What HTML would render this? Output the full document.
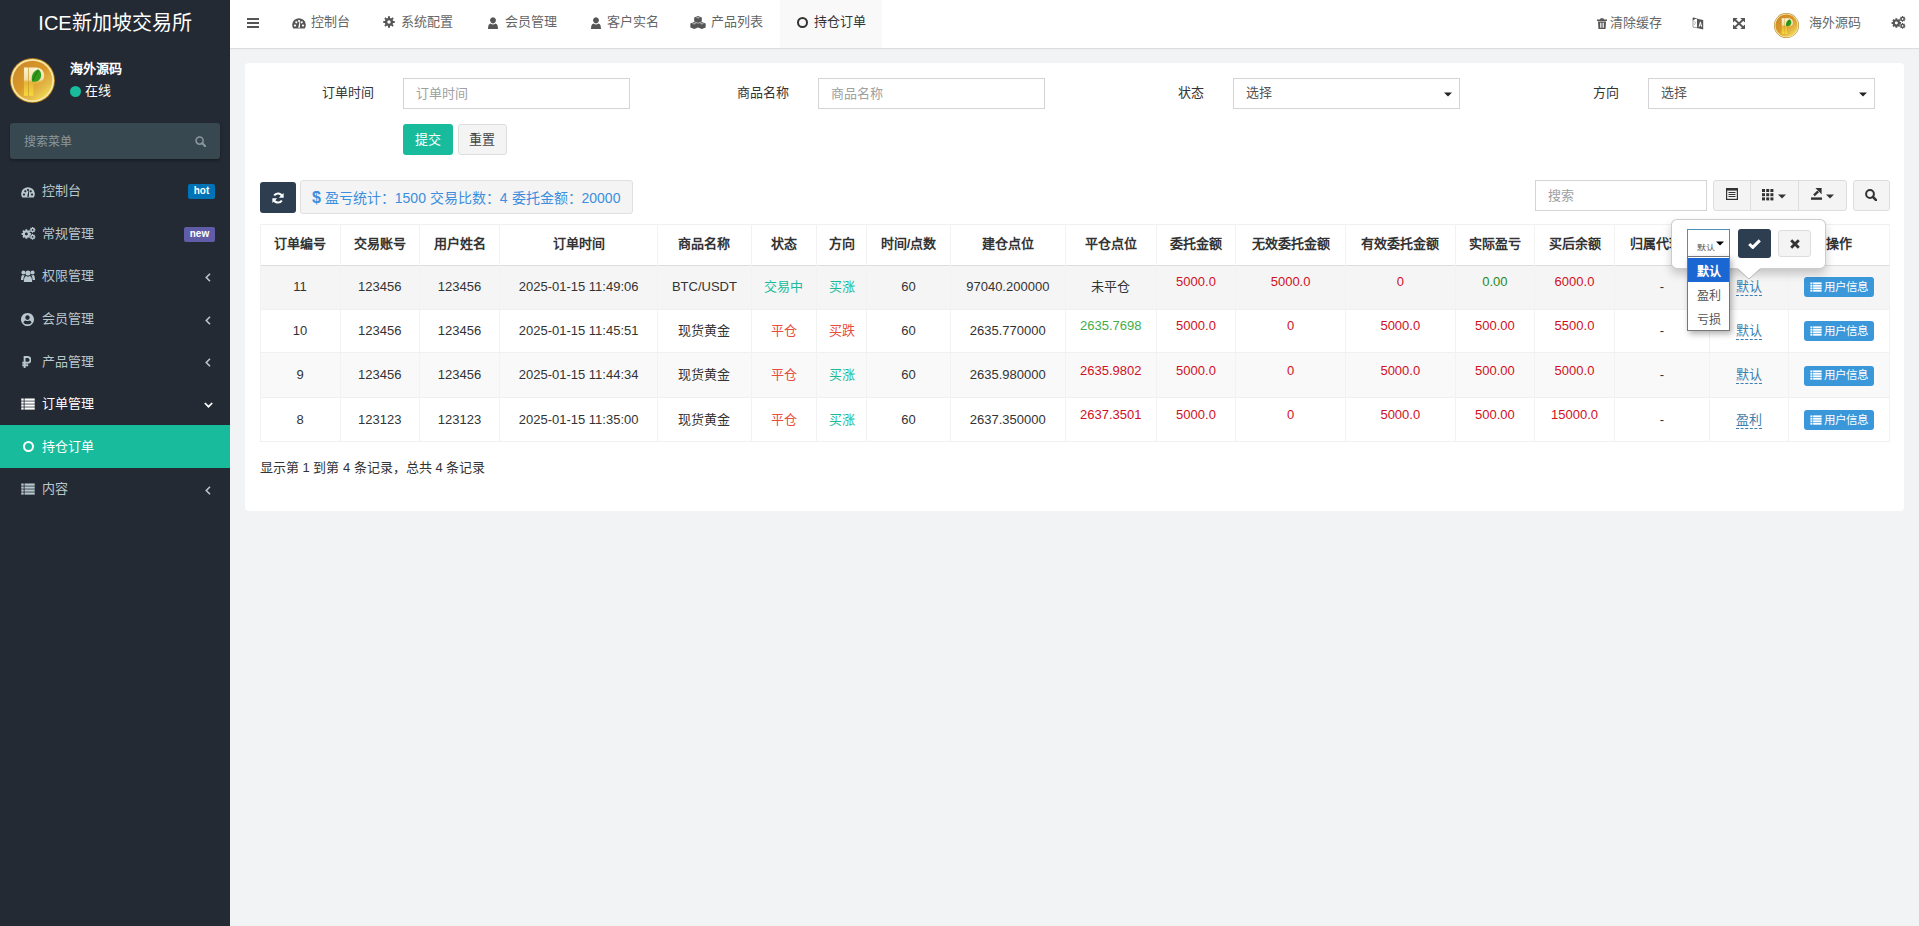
<!DOCTYPE html>
<html lang="zh-CN"><head><meta charset="utf-8">
<style>
*{box-sizing:border-box;margin:0;padding:0}
html,body{width:1919px;height:926px;overflow:hidden}
body{font-family:"Liberation Sans",sans-serif;font-size:13px;color:#333;background:#f1f3f5;position:relative}
.a{position:absolute;white-space:nowrap}
svg{display:block}
.badge{position:absolute;height:15px;line-height:13.5px;font-size:10px;font-weight:bold;color:#fff;text-align:center;border-radius:2px;font-family:"Liberation Sans",sans-serif}
</style></head><body>

<div class="a" style="left:0.0px;top:0.0px;width:230.0px;height:926.0px;background:#242a33"></div>
<div class="a" style="left:0.0px;top:8.0px;width:230px;height:30px;line-height:30px;text-align:center;color:#fff;font-size:20px">ICE新加坡交易所</div>
<div class="a" style="left:10.0px;top:57.5px;"><svg width="45" height="45" viewBox="0 0 100 100"><defs><linearGradient id="ga1" x1="0.15" y1="0.1" x2="0.85" y2="0.95"><stop offset="0" stop-color="#cf8a2a"/><stop offset=".45" stop-color="#d99828"/><stop offset=".75" stop-color="#e3b848"/><stop offset="1" stop-color="#f2e050"/></linearGradient><linearGradient id="pa1" x1="0" y1="0" x2="0" y2="1"><stop offset="0" stop-color="#fbf3d0"/><stop offset=".42" stop-color="#f3e0a8"/><stop offset=".52" stop-color="#e6b23a"/><stop offset="1" stop-color="#f4dc38"/></linearGradient></defs><circle cx="50" cy="50" r="50" fill="#b07818"/><circle cx="50" cy="50" r="48" fill="#f6e9a8"/><circle cx="50" cy="50" r="44" fill="url(#ga1)"/><path d="M31,21 H57 C70,21 76,30 76,39 C76,49 69,57 57,57 H52 V84 H31 Z" fill="url(#pa1)"/><rect x="40" y="21" width="2.2" height="63" fill="#c89a30" opacity=".7"/><path d="M49,52 C46,40 52,28 63,25 C71,31 72,45 62,51 C58,53 53,53 49,52 Z" fill="#2f9a1c"/><path d="M51,49 C55,41 58,34 63,28" stroke="#1d6a10" stroke-width="2" fill="none"/></svg></div>
<div class="a" style="left:70.0px;top:59.0px;height:20px;line-height:20px;color:#fff;font-weight:bold">海外源码</div>
<div class="a" style="left:70.0px;top:85.6px;width:11.0px;height:11.0px;background:#18bc9c;border-radius:50%"></div>
<div class="a" style="left:84.5px;top:81.0px;height:20px;line-height:20px;color:#fff">在线</div>
<div class="a" style="left:10.0px;top:123.0px;width:210.0px;height:35.5px;background:#374850;border-radius:3px;box-shadow:0 2px 3px rgba(0,0,0,.3)"></div>
<div class="a" style="left:24.0px;top:131.5px;height:20px;line-height:20px;color:#8a979e;font-size:12px">搜索菜单</div>
<div class="a" style="left:195.0px;top:136.0px;"><svg width="11" height="11" viewBox="0 0 12 12" ><g fill="none" stroke="#8a979e" stroke-width="1.7"><circle cx="5" cy="5" r="3.9"/><path d="M7.9,7.9 L11.2,11.2" stroke-linecap="round" stroke-width="2.3"/></g></svg></div>
<div class="a" style="left:42.0px;top:181.3px;height:20px;line-height:20px;color:#b8c7ce">控制台</div>
<div class="a" style="left:21.0px;top:185.8px;"><svg width="14" height="12" viewBox="0 0 14 12" ><path fill="#b8c7ce" fill-rule="evenodd" d="M1.2,11.5 A6.8,6.8 0 1 1 12.8,11.5 Z M3,7.6 a1,1 0 1,0 0.01,0 Z M4.3,4.3 a1,1 0 1,0 0.01,0 Z M7,3 a1,1 0 1,0 0.01,0 Z M9.7,4.3 a1,1 0 1,0 0.01,0 Z M11,7.6 a1,1 0 1,0 0.01,0 Z M6.2,10.8 L7.6,4.6 L8.1,4.7 L7.9,10.8 Z"/></svg></div>
<div class="a" style="left:42.0px;top:223.9px;height:20px;line-height:20px;color:#b8c7ce">常规管理</div>
<div class="a" style="left:21.0px;top:227.4px;"><svg width="15" height="13" viewBox="0 0 15 14" ><path fill="#b8c7ce" fill-rule="evenodd" d="M9.07,6.57 L10.30,6.59 L10.30,8.61 L9.07,8.63 L8.66,9.61 L9.52,10.49 L8.09,11.92 L7.21,11.06 L6.23,11.47 L6.21,12.70 L4.19,12.70 L4.17,11.47 L3.19,11.06 L2.31,11.92 L0.88,10.49 L1.74,9.61 L1.33,8.63 L0.10,8.61 L0.10,6.59 L1.33,6.57 L1.74,5.59 L0.88,4.71 L2.31,3.28 L3.19,4.14 L4.17,3.73 L4.19,2.50 L6.21,2.50 L6.23,3.73 L7.21,4.14 L8.09,3.28 L9.52,4.71 L8.66,5.59 Z M3.60,7.60 a1.60,1.60 0 1,0 3.20,0 a1.60,1.60 0 1,0 -3.20,0 Z M14.22,2.48 L14.94,2.50 L14.94,3.70 L14.22,3.72 L13.98,4.31 L14.48,4.82 L13.62,5.68 L13.11,5.18 L12.52,5.42 L12.50,6.14 L11.30,6.14 L11.28,5.42 L10.69,5.18 L10.18,5.68 L9.32,4.82 L9.82,4.31 L9.58,3.72 L8.86,3.70 L8.86,2.50 L9.58,2.48 L9.82,1.89 L9.32,1.38 L10.18,0.52 L10.69,1.02 L11.28,0.78 L11.30,0.06 L12.50,0.06 L12.52,0.78 L13.11,1.02 L13.62,0.52 L14.48,1.38 L13.98,1.89 Z M11.00,3.10 a0.90,0.90 0 1,0 1.80,0 a0.90,0.90 0 1,0 -1.80,0 Z M14.22,9.98 L14.94,10.00 L14.94,11.20 L14.22,11.22 L13.98,11.81 L14.48,12.32 L13.62,13.18 L13.11,12.68 L12.52,12.92 L12.50,13.64 L11.30,13.64 L11.28,12.92 L10.69,12.68 L10.18,13.18 L9.32,12.32 L9.82,11.81 L9.58,11.22 L8.86,11.20 L8.86,10.00 L9.58,9.98 L9.82,9.39 L9.32,8.88 L10.18,8.02 L10.69,8.52 L11.28,8.28 L11.30,7.56 L12.50,7.56 L12.52,8.28 L13.11,8.52 L13.62,8.02 L14.48,8.88 L13.98,9.39 Z M11.00,10.60 a0.90,0.90 0 1,0 1.80,0 a0.90,0.90 0 1,0 -1.80,0 Z"/></svg></div>
<div class="a" style="left:42.0px;top:266.4px;height:20px;line-height:20px;color:#b8c7ce">权限管理</div>
<div class="a" style="left:21.0px;top:270.4px;"><svg width="14" height="12" viewBox="0 0 14 12" ><g fill="#b8c7ce"><circle cx="7" cy="3" r="2.6"/><path d="M2.8,12 C2.8,8.2 4,6.3 5.3,6.1 C5.9,6.6 6.4,6.8 7,6.8 C7.6,6.8 8.1,6.6 8.7,6.1 C10,6.3 11.2,8.2 11.2,12 Z"/><circle cx="2.4" cy="2.6" r="2"/><circle cx="11.6" cy="2.6" r="2"/><path d="M0,10 C0,6.2 1,5.1 1.7,5 C2.3,5.4 3,5.5 3.8,5.3 C3,6.4 2.4,8 2.4,10 Z M14,10 C14,6.2 13,5.1 12.3,5 C11.7,5.4 11,5.5 10.2,5.3 C11,6.4 11.6,8 11.6,10 Z"/></g></svg></div>
<div class="a" style="left:205.0px;top:272.9px;"><svg width="6" height="9" viewBox="0 0 6 9" ><path fill="none" stroke="#b8c7ce" stroke-width="1.6" d="M5,0.8 L1.3,4.5 L5,8.2"/></svg></div>
<div class="a" style="left:42.0px;top:309.0px;height:20px;line-height:20px;color:#b8c7ce">会员管理</div>
<div class="a" style="left:21.0px;top:312.5px;"><svg width="13" height="13" viewBox="0 0 13 13" ><path fill="#b8c7ce" fill-rule="evenodd" d="M6.5,0 a6.5,6.5 0 1,0 0.01,0 Z M6.5,2.3 a2.2,2.3 0 1,0 0.01,0 Z M6.5,11.3 C4.8,11.3 3.3,10.6 2.4,9.4 C2.8,8.2 3.7,7.5 4.6,7.4 C5.2,7.8 5.8,8 6.5,8 C7.2,8 7.8,7.8 8.4,7.4 C9.3,7.5 10.2,8.2 10.6,9.4 C9.7,10.6 8.2,11.3 6.5,11.3 Z"/></svg></div>
<div class="a" style="left:205.0px;top:315.5px;"><svg width="6" height="9" viewBox="0 0 6 9" ><path fill="none" stroke="#b8c7ce" stroke-width="1.6" d="M5,0.8 L1.3,4.5 L5,8.2"/></svg></div>
<div class="a" style="left:42.0px;top:351.6px;height:20px;line-height:20px;color:#b8c7ce">产品管理</div>
<div class="a" style="left:22.0px;top:355.6px;"><svg width="9" height="12" viewBox="0 0 9 12" ><path fill="none" stroke="#b8c7ce" stroke-width="1.9" d="M2.6,12 V1 H5.6 A2.9,2.9 0 0 1 5.6,6.8 H0.3 M0.3,9.3 H6.2"/></svg></div>
<div class="a" style="left:205.0px;top:358.1px;"><svg width="6" height="9" viewBox="0 0 6 9" ><path fill="none" stroke="#b8c7ce" stroke-width="1.6" d="M5,0.8 L1.3,4.5 L5,8.2"/></svg></div>
<div class="a" style="left:42.0px;top:394.1px;height:20px;line-height:20px;color:#fff">订单管理</div>
<div class="a" style="left:21.0px;top:398.1px;"><svg width="14" height="12" viewBox="0 0 14 12.5" ><g fill="#fff"><rect x="0" y="0.5" width="2.5" height="2.3"/><rect x="3.4" y="0.5" width="10.6" height="2.3"/><rect x="0" y="3.6" width="2.5" height="2.3"/><rect x="3.4" y="3.6" width="10.6" height="2.3"/><rect x="0" y="6.7" width="2.5" height="2.3"/><rect x="3.4" y="6.7" width="10.6" height="2.3"/><rect x="0" y="9.8" width="2.5" height="2.3"/><rect x="3.4" y="9.8" width="10.6" height="2.3"/></g></svg></div>
<div class="a" style="left:204.0px;top:402.1px;"><svg width="9" height="6" viewBox="0 0 9 6" ><path fill="none" stroke="#fff" stroke-width="1.7" d="M0.8,1 L4.5,4.7 L8.2,1"/></svg></div>
<div class="a" style="left:0.0px;top:425.4px;width:230.0px;height:42.6px;background:#18bc9c"></div>
<div class="a" style="left:42.0px;top:436.7px;height:20px;line-height:20px;color:#fff">持仓订单</div>
<div class="a" style="left:22.5px;top:441.2px;"><svg width="11" height="11" viewBox="0 0 11 11" ><circle cx="5.5" cy="5.5" r="4.5" fill="none" stroke="#fff" stroke-width="2.0"/></svg></div>
<div class="a" style="left:42.0px;top:479.3px;height:20px;line-height:20px;color:#b8c7ce">内容</div>
<div class="a" style="left:21.0px;top:483.3px;"><svg width="14" height="12" viewBox="0 0 14 12.5" ><g fill="#b8c7ce"><rect x="0" y="0.5" width="2.5" height="2.3"/><rect x="3.4" y="0.5" width="10.6" height="2.3"/><rect x="0" y="3.6" width="2.5" height="2.3"/><rect x="3.4" y="3.6" width="10.6" height="2.3"/><rect x="0" y="6.7" width="2.5" height="2.3"/><rect x="3.4" y="6.7" width="10.6" height="2.3"/><rect x="0" y="9.8" width="2.5" height="2.3"/><rect x="3.4" y="9.8" width="10.6" height="2.3"/></g></svg></div>
<div class="a" style="left:205.0px;top:485.8px;"><svg width="6" height="9" viewBox="0 0 6 9" ><path fill="none" stroke="#b8c7ce" stroke-width="1.6" d="M5,0.8 L1.3,4.5 L5,8.2"/></svg></div>
<div class="badge" style="left:188px;top:184px;width:27px;background:#0073b7">hot</div>
<div class="badge" style="left:184px;top:226.5px;width:31px;background:#605ca8">new</div>
<div class="a" style="left:230.0px;top:0.0px;width:1689.0px;height:48.0px;background:#fff;box-shadow:0 1px 1px rgba(0,0,0,.09)"></div>
<div class="a" style="left:247.0px;top:17.5px;"><svg width="12" height="10" viewBox="0 0 12 10" ><g fill="#555"><rect x="0" y="0" width="12" height="2"/><rect x="0" y="4" width="12" height="2"/><rect x="0" y="8" width="12" height="2"/></g></svg></div>
<div class="a" style="left:780.0px;top:0.0px;width:101.6px;height:48.0px;background:#f9f9f9"></div>
<div class="a" style="left:310.5px;top:12.0px;height:20px;line-height:20px;color:#666">控制台</div>
<div class="a" style="left:292.0px;top:16.5px;"><svg width="14" height="12" viewBox="0 0 14 12" ><path fill="#555" fill-rule="evenodd" d="M1.2,11.5 A6.8,6.8 0 1 1 12.8,11.5 Z M3,7.6 a1,1 0 1,0 0.01,0 Z M4.3,4.3 a1,1 0 1,0 0.01,0 Z M7,3 a1,1 0 1,0 0.01,0 Z M9.7,4.3 a1,1 0 1,0 0.01,0 Z M11,7.6 a1,1 0 1,0 0.01,0 Z M6.2,10.8 L7.6,4.6 L8.1,4.7 L7.9,10.8 Z"/></svg></div>
<div class="a" style="left:401.0px;top:12.0px;height:20px;line-height:20px;color:#666">系统配置</div>
<div class="a" style="left:383.0px;top:16.0px;"><svg width="12" height="12" viewBox="0 0 14 14" ><path fill="#555" fill-rule="evenodd" d="M11.76,5.84 L13.69,5.80 L13.69,8.20 L11.76,8.16 L11.19,9.54 L12.58,10.89 L10.89,12.58 L9.54,11.19 L8.16,11.76 L8.20,13.69 L5.80,13.69 L5.84,11.76 L4.46,11.19 L3.11,12.58 L1.42,10.89 L2.81,9.54 L2.24,8.16 L0.31,8.20 L0.31,5.80 L2.24,5.84 L2.81,4.46 L1.42,3.11 L3.11,1.42 L4.46,2.81 L5.84,2.24 L5.80,0.31 L8.20,0.31 L8.16,2.24 L9.54,2.81 L10.89,1.42 L12.58,3.11 L11.19,4.46 Z M5.00,7.00 a2.00,2.00 0 1,0 4.00,0 a2.00,2.00 0 1,0 -4.00,0 Z"/></svg></div>
<div class="a" style="left:504.6px;top:12.0px;height:20px;line-height:20px;color:#666">会员管理</div>
<div class="a" style="left:487.5px;top:16.5px;"><svg width="10" height="12" viewBox="0 0 10 12" ><path fill="#555" d="M5,0.2 a2.9,3.1 0 1,1 -0.01,0 Z M0,12 C0,8.2 1.2,6.8 2.6,6.6 C3.3,7.3 4.1,7.6 5,7.6 C5.9,7.6 6.7,7.3 7.4,6.6 C8.8,6.8 10,8.2 10,12 Z"/></svg></div>
<div class="a" style="left:607.3px;top:12.0px;height:20px;line-height:20px;color:#666">客户实名</div>
<div class="a" style="left:591.0px;top:16.5px;"><svg width="10" height="12" viewBox="0 0 10 12" ><path fill="#555" d="M5,0.2 a2.9,3.1 0 1,1 -0.01,0 Z M0,12 C0,8.2 1.2,6.8 2.6,6.6 C3.3,7.3 4.1,7.6 5,7.6 C5.9,7.6 6.7,7.3 7.4,6.6 C8.8,6.8 10,8.2 10,12 Z"/></svg></div>
<div class="a" style="left:711.0px;top:12.0px;height:20px;line-height:20px;color:#666">产品列表</div>
<div class="a" style="left:690.0px;top:15.5px;"><svg width="16" height="13" viewBox="0 0 16 13.6" ><g fill="#555"><path d="M8,0 L12,1.6 V5.8 L8,7.4 L4,5.8 V1.6 Z"/><path d="M4,6.2 L8,7.8 V12 L4,13.6 L0,12 V7.8 Z"/><path d="M12,6.2 L16,7.8 V12 L12,13.6 L8,12 V7.8 Z"/></g><g fill="#fff" opacity=".55"><path d="M8,2.6 L5.5,1.9 L8,1 L10.5,1.9 Z"/><path d="M4,8.8 L1.5,8.1 L4,7.2 L6.5,8.1 Z"/><path d="M12,8.8 L9.5,8.1 L12,7.2 L14.5,8.1 Z"/></g></svg></div>
<div class="a" style="left:796.5px;top:16.5px;"><svg width="11" height="11" viewBox="0 0 11 11" ><circle cx="5.5" cy="5.5" r="4.5" fill="none" stroke="#333" stroke-width="2.0"/></svg></div>
<div class="a" style="left:814.0px;top:12.0px;height:20px;line-height:20px;color:#333">持仓订单</div>
<div class="a" style="left:1596.5px;top:17.5px;"><svg width="10" height="11" viewBox="0 0 10 11" ><path fill="#555" fill-rule="evenodd" d="M0,1.6 H3 L3.6,0.2 H6.4 L7,1.6 H10 V2.9 H0 Z M1,3.6 H9 L8.6,10.5 Q8.5,11 8,11 H2 Q1.5,11 1.4,10.5 Z M3,4.8 V9.8 H3.8 V4.8 Z M4.6,4.8 V9.8 H5.4 V4.8 Z M6.2,4.8 V9.8 H7 V4.8 Z"/></svg></div>
<div class="a" style="left:1610.0px;top:12.5px;height:20px;line-height:20px;color:#666">清除缓存</div>
<div class="a" style="left:1692.0px;top:16.5px;"><svg width="12" height="13" viewBox="0 0 12 13" ><path d="M1,1.2 L5.5,1.8 V10.8 L1,10.2 Z" fill="#fff" stroke="#555" stroke-width=".8" opacity=".7"/><path d="M0.8,0.5 L4.5,1.3 L0.8,3.5 Z" fill="#555"/><path d="M5,1.8 L11.2,3 V12.4 L5,11 Z" fill="#555"/><path d="M6.6,9.8 L8,4.8 H8.8 L10.2,9.8 H9.2 L8.9,8.6 H7.9 L7.6,9.8 Z M8.1,7.7 H8.7 L8.4,6.2 Z" fill="#fff"/><path d="M2.2,5 Q3,4 3.6,5.5 Q3,7.5 2,8" stroke="#555" stroke-width=".7" fill="none" opacity=".6"/></svg></div>
<div class="a" style="left:1733.0px;top:17.5px;"><svg width="12" height="11" viewBox="0 0 12 11" ><g fill="#555"><path d="M0,0 H4.8 L0,4.6 Z"/><path d="M12,0 V4.6 L7.2,0 Z"/><path d="M0,11 V6.4 L4.8,11 Z"/><path d="M12,11 H7.2 L12,6.4 Z"/></g><path d="M1.6,1.5 L10.4,9.5 M10.4,1.5 L1.6,9.5" stroke="#555" stroke-width="1.8"/></svg></div>
<div class="a" style="left:1774.0px;top:13.0px;"><svg width="25" height="25" viewBox="0 0 100 100"><defs><linearGradient id="ga2" x1="0.15" y1="0.1" x2="0.85" y2="0.95"><stop offset="0" stop-color="#cf8a2a"/><stop offset=".45" stop-color="#d99828"/><stop offset=".75" stop-color="#e3b848"/><stop offset="1" stop-color="#f2e050"/></linearGradient><linearGradient id="pa2" x1="0" y1="0" x2="0" y2="1"><stop offset="0" stop-color="#fbf3d0"/><stop offset=".42" stop-color="#f3e0a8"/><stop offset=".52" stop-color="#e6b23a"/><stop offset="1" stop-color="#f4dc38"/></linearGradient></defs><circle cx="50" cy="50" r="50" fill="#b07818"/><circle cx="50" cy="50" r="48" fill="#f6e9a8"/><circle cx="50" cy="50" r="44" fill="url(#ga2)"/><path d="M31,21 H57 C70,21 76,30 76,39 C76,49 69,57 57,57 H52 V84 H31 Z" fill="url(#pa2)"/><rect x="40" y="21" width="2.2" height="63" fill="#c89a30" opacity=".7"/><path d="M49,52 C46,40 52,28 63,25 C71,31 72,45 62,51 C58,53 53,53 49,52 Z" fill="#2f9a1c"/><path d="M51,49 C55,41 58,34 63,28" stroke="#1d6a10" stroke-width="2" fill="none"/></svg></div>
<div class="a" style="left:1809.0px;top:12.5px;height:20px;line-height:20px;color:#666">海外源码</div>
<div class="a" style="left:1891.0px;top:16.0px;"><svg width="15" height="13" viewBox="0 0 15 14" ><path fill="#555" fill-rule="evenodd" d="M9.07,6.57 L10.30,6.59 L10.30,8.61 L9.07,8.63 L8.66,9.61 L9.52,10.49 L8.09,11.92 L7.21,11.06 L6.23,11.47 L6.21,12.70 L4.19,12.70 L4.17,11.47 L3.19,11.06 L2.31,11.92 L0.88,10.49 L1.74,9.61 L1.33,8.63 L0.10,8.61 L0.10,6.59 L1.33,6.57 L1.74,5.59 L0.88,4.71 L2.31,3.28 L3.19,4.14 L4.17,3.73 L4.19,2.50 L6.21,2.50 L6.23,3.73 L7.21,4.14 L8.09,3.28 L9.52,4.71 L8.66,5.59 Z M3.60,7.60 a1.60,1.60 0 1,0 3.20,0 a1.60,1.60 0 1,0 -3.20,0 Z M14.22,2.48 L14.94,2.50 L14.94,3.70 L14.22,3.72 L13.98,4.31 L14.48,4.82 L13.62,5.68 L13.11,5.18 L12.52,5.42 L12.50,6.14 L11.30,6.14 L11.28,5.42 L10.69,5.18 L10.18,5.68 L9.32,4.82 L9.82,4.31 L9.58,3.72 L8.86,3.70 L8.86,2.50 L9.58,2.48 L9.82,1.89 L9.32,1.38 L10.18,0.52 L10.69,1.02 L11.28,0.78 L11.30,0.06 L12.50,0.06 L12.52,0.78 L13.11,1.02 L13.62,0.52 L14.48,1.38 L13.98,1.89 Z M11.00,3.10 a0.90,0.90 0 1,0 1.80,0 a0.90,0.90 0 1,0 -1.80,0 Z M14.22,9.98 L14.94,10.00 L14.94,11.20 L14.22,11.22 L13.98,11.81 L14.48,12.32 L13.62,13.18 L13.11,12.68 L12.52,12.92 L12.50,13.64 L11.30,13.64 L11.28,12.92 L10.69,12.68 L10.18,13.18 L9.32,12.32 L9.82,11.81 L9.58,11.22 L8.86,11.20 L8.86,10.00 L9.58,9.98 L9.82,9.39 L9.32,8.88 L10.18,8.02 L10.69,8.52 L11.28,8.28 L11.30,7.56 L12.50,7.56 L12.52,8.28 L13.11,8.52 L13.62,8.02 L14.48,8.88 L13.98,9.39 Z M11.00,10.60 a0.90,0.90 0 1,0 1.80,0 a0.90,0.90 0 1,0 -1.80,0 Z"/></svg></div>
<div class="a" style="left:245.0px;top:63.0px;width:1659.0px;height:448.0px;background:#fff;border-radius:4px"></div>
<div class="a" style="left:173.5px;top:83.0px;width:200px;height:20px;line-height:20px;text-align:right;color:#333">订单时间</div>
<div class="a" style="left:403.0px;top:78.0px;width:227.0px;height:30.5px;border:1px solid #d4d4d4;background:#fff"></div>
<div class="a" style="left:416.0px;top:83.5px;height:20px;line-height:20px;color:#a0a0a0">订单时间</div>
<div class="a" style="left:588.6px;top:83.0px;width:200px;height:20px;line-height:20px;text-align:right;color:#333">商品名称</div>
<div class="a" style="left:818.1px;top:78.0px;width:227.0px;height:30.5px;border:1px solid #d4d4d4;background:#fff"></div>
<div class="a" style="left:831.1px;top:83.5px;height:20px;line-height:20px;color:#a0a0a0">商品名称</div>
<div class="a" style="left:1003.7px;top:83.0px;width:200px;height:20px;line-height:20px;text-align:right;color:#333">状态</div>
<div class="a" style="left:1233.2px;top:78.0px;width:227.0px;height:30.5px;border:1px solid #d4d4d4;background:#fff"></div>
<div class="a" style="left:1246.2px;top:82.5px;height:20px;line-height:20px;color:#555">选择</div>
<div class="a" style="left:1444.2px;top:91.5px;"><svg width="8" height="5" viewBox="0 0 8 5" ><path fill="#222" d="M0,0.5 H8 L4,4.5 Z"/></svg></div>
<div class="a" style="left:1418.8px;top:83.0px;width:200px;height:20px;line-height:20px;text-align:right;color:#333">方向</div>
<div class="a" style="left:1648.3px;top:78.0px;width:227.0px;height:30.5px;border:1px solid #d4d4d4;background:#fff"></div>
<div class="a" style="left:1661.3px;top:82.5px;height:20px;line-height:20px;color:#555">选择</div>
<div class="a" style="left:1859.3px;top:91.5px;"><svg width="8" height="5" viewBox="0 0 8 5" ><path fill="#222" d="M0,0.5 H8 L4,4.5 Z"/></svg></div>
<div class="a" style="left:403.0px;top:124.0px;width:50.0px;height:31.0px;background:#18bc9c;border-radius:3px"></div>
<div class="a" style="left:403.0px;top:129.5px;width:50px;height:20px;line-height:20px;text-align:center;color:#fff">提交</div>
<div class="a" style="left:457.5px;top:124.0px;width:49.0px;height:31.0px;background:#f4f4f4;border:1px solid #ddd;border-radius:3px"></div>
<div class="a" style="left:457.0px;top:129.5px;width:50px;height:20px;line-height:20px;text-align:center;color:#444">重置</div>
<div class="a" style="left:260.0px;top:182.0px;width:36.0px;height:31.0px;background:#2c3e50;border-radius:3px"></div>
<div class="a" style="left:272.0px;top:191.5px;"><svg width="12" height="12" viewBox="0 0 12 12" ><g fill="none" stroke="#fff" stroke-width="2"><path d="M10.2,4.6 A4.4,4.4 0 0 0 2.2,3.6"/><path d="M1.8,7.4 A4.4,4.4 0 0 0 9.8,8.4"/></g><g fill="#fff"><path d="M11.6,1 V5.8 H6.8 Z"/><path d="M0.4,11 V6.2 H5.2 Z"/></g></svg></div>
<div class="a" style="left:300.0px;top:180.0px;width:333.0px;height:34.0px;background:#f4f4f4;border:1px solid #e0e0e0;border-radius:3px"></div>
<div class="a" style="left:312.0px;top:187.5px;height:20px;line-height:20px;color:#3c8ede;font-size:14px"><b style="font-size:16px">$</b> 盈亏统计：1500 交易比数：4 委托金额：20000</div>
<div class="a" style="left:1535.0px;top:180.0px;width:172.0px;height:31.0px;border:1px solid #d4d4d4;background:#fff"></div>
<div class="a" style="left:1548.0px;top:186.0px;height:20px;line-height:20px;color:#a0a0a0">搜索</div>
<div class="a" style="left:1712.5px;top:180.0px;width:134.0px;height:31.0px;background:#f4f4f4;border:1px solid #ddd;border-radius:3px"></div>
<div class="a" style="left:1749.5px;top:180.0px;width:1.0px;height:31.0px;background:#ddd"></div>
<div class="a" style="left:1797.8px;top:180.0px;width:1.0px;height:31.0px;background:#ddd"></div>
<div class="a" style="left:1726.0px;top:188.0px;"><svg width="12" height="12" viewBox="0 0 12 12" ><g fill="none" stroke="#333"><rect x="0.6" y="0.6" width="10.8" height="10.8" stroke-width="1.2"/></g><g fill="#333"><rect x="0.6" y="0.6" width="10.8" height="2"/><rect x="2.5" y="4" width="7" height="1"/><rect x="2.5" y="6" width="7" height="1"/><rect x="2.5" y="8" width="7" height="1"/></g></svg></div>
<div class="a" style="left:1762.0px;top:189.0px;"><svg width="12" height="12" viewBox="0 0 12 12" ><g fill="#333"><rect x="0.0" y="0.0" width="3" height="3"/><rect x="0.0" y="4.2" width="3" height="3"/><rect x="0.0" y="8.4" width="3" height="3"/><rect x="4.2" y="0.0" width="3" height="3"/><rect x="4.2" y="4.2" width="3" height="3"/><rect x="4.2" y="8.4" width="3" height="3"/><rect x="8.4" y="0.0" width="3" height="3"/><rect x="8.4" y="4.2" width="3" height="3"/><rect x="8.4" y="8.4" width="3" height="3"/></g></svg></div>
<div class="a" style="left:1778.0px;top:194.0px;"><svg width="8" height="5" viewBox="0 0 8 5" ><path fill="#333" d="M0,0.5 H8 L4,4.5 Z"/></svg></div>
<div class="a" style="left:1810.5px;top:188.0px;"><svg width="12" height="12" viewBox="0 0 12 12" ><g fill="#333"><rect x="0" y="9.4" width="11" height="2.4"/><path d="M4.4,0 H10.6 V6.2 Z"/><path d="M2.2,6.6 L6.4,2.6 L8,4.2 L3.8,8.2 Z"/></g></svg></div>
<div class="a" style="left:1826.0px;top:194.0px;"><svg width="8" height="5" viewBox="0 0 8 5" ><path fill="#333" d="M0,0.5 H8 L4,4.5 Z"/></svg></div>
<div class="a" style="left:1852.5px;top:180.0px;width:37.0px;height:31.0px;background:#f4f4f4;border:1px solid #ddd;border-radius:3px"></div>
<div class="a" style="left:1865.0px;top:189.0px;"><svg width="12" height="12" viewBox="0 0 12 12" ><g fill="none" stroke="#333" stroke-width="2.0"><circle cx="5" cy="5" r="3.9"/><path d="M7.9,7.9 L11.2,11.2" stroke-linecap="round" stroke-width="2.6"/></g></svg></div>
<div class="a" style="left:260.0px;top:265.0px;width:1629.2px;height:44.5px;background:#f5f5f5"></div>
<div class="a" style="left:260.0px;top:352.5px;width:1629.2px;height:44.5px;background:#f9f9f9"></div>
<div class="a" style="left:260.0px;top:224.0px;width:1629.2px;height:1.0px;background:#f0f0f0"></div>
<div class="a" style="left:260.0px;top:264.5px;width:1629.2px;height:1.0px;background:#dcdcdc"></div>
<div class="a" style="left:260.0px;top:309.0px;width:1629.2px;height:1.0px;background:#f0f0f0"></div>
<div class="a" style="left:260.0px;top:352.0px;width:1629.2px;height:1.0px;background:#f0f0f0"></div>
<div class="a" style="left:260.0px;top:396.5px;width:1629.2px;height:1.0px;background:#f0f0f0"></div>
<div class="a" style="left:260.0px;top:440.5px;width:1629.2px;height:1.0px;background:#f0f0f0"></div>
<div class="a" style="left:259.5px;top:224.0px;width:1.0px;height:217.5px;background:#f2f2f2"></div>
<div class="a" style="left:339.5px;top:224.0px;width:1.0px;height:217.5px;background:#f2f2f2"></div>
<div class="a" style="left:419.0px;top:224.0px;width:1.0px;height:217.5px;background:#f2f2f2"></div>
<div class="a" style="left:499.0px;top:224.0px;width:1.0px;height:217.5px;background:#f2f2f2"></div>
<div class="a" style="left:657.3px;top:224.0px;width:1.0px;height:217.5px;background:#f2f2f2"></div>
<div class="a" style="left:750.5px;top:224.0px;width:1.0px;height:217.5px;background:#f2f2f2"></div>
<div class="a" style="left:815.8px;top:224.0px;width:1.0px;height:217.5px;background:#f2f2f2"></div>
<div class="a" style="left:866.1px;top:224.0px;width:1.0px;height:217.5px;background:#f2f2f2"></div>
<div class="a" style="left:949.9px;top:224.0px;width:1.0px;height:217.5px;background:#f2f2f2"></div>
<div class="a" style="left:1064.8px;top:224.0px;width:1.0px;height:217.5px;background:#f2f2f2"></div>
<div class="a" style="left:1155.8px;top:224.0px;width:1.0px;height:217.5px;background:#f2f2f2"></div>
<div class="a" style="left:1235.2px;top:224.0px;width:1.0px;height:217.5px;background:#f2f2f2"></div>
<div class="a" style="left:1344.9px;top:224.0px;width:1.0px;height:217.5px;background:#f2f2f2"></div>
<div class="a" style="left:1454.8px;top:224.0px;width:1.0px;height:217.5px;background:#f2f2f2"></div>
<div class="a" style="left:1534.0px;top:224.0px;width:1.0px;height:217.5px;background:#f2f2f2"></div>
<div class="a" style="left:1614.0px;top:224.0px;width:1.0px;height:217.5px;background:#f2f2f2"></div>
<div class="a" style="left:1708.9px;top:224.0px;width:1.0px;height:217.5px;background:#f2f2f2"></div>
<div class="a" style="left:1787.9px;top:224.0px;width:1.0px;height:217.5px;background:#f2f2f2"></div>
<div class="a" style="left:1888.7px;top:224.0px;width:1.0px;height:217.5px;background:#f2f2f2"></div>
<div class="a" style="left:260.0px;top:234.0px;width:80px;height:20px;line-height:20px;text-align:center;color:#333;font-weight:bold">订单编号</div>
<div class="a" style="left:340.2px;top:234.0px;width:79px;height:20px;line-height:20px;text-align:center;color:#333;font-weight:bold">交易账号</div>
<div class="a" style="left:419.5px;top:234.0px;width:80px;height:20px;line-height:20px;text-align:center;color:#333;font-weight:bold">用户姓名</div>
<div class="a" style="left:499.6px;top:234.0px;width:158px;height:20px;line-height:20px;text-align:center;color:#333;font-weight:bold">订单时间</div>
<div class="a" style="left:657.9px;top:234.0px;width:93px;height:20px;line-height:20px;text-align:center;color:#333;font-weight:bold">商品名称</div>
<div class="a" style="left:751.1px;top:234.0px;width:65px;height:20px;line-height:20px;text-align:center;color:#333;font-weight:bold">状态</div>
<div class="a" style="left:816.5px;top:234.0px;width:50px;height:20px;line-height:20px;text-align:center;color:#333;font-weight:bold">方向</div>
<div class="a" style="left:867.0px;top:234.0px;width:83px;height:20px;line-height:20px;text-align:center;color:#333;font-weight:bold">时间/点数</div>
<div class="a" style="left:950.8px;top:234.0px;width:114px;height:20px;line-height:20px;text-align:center;color:#333;font-weight:bold">建仓点位</div>
<div class="a" style="left:1065.3px;top:234.0px;width:91px;height:20px;line-height:20px;text-align:center;color:#333;font-weight:bold">平仓点位</div>
<div class="a" style="left:1156.5px;top:234.0px;width:79px;height:20px;line-height:20px;text-align:center;color:#333;font-weight:bold">委托金额</div>
<div class="a" style="left:1236.1px;top:234.0px;width:109px;height:20px;line-height:20px;text-align:center;color:#333;font-weight:bold">无效委托金额</div>
<div class="a" style="left:1345.8px;top:234.0px;width:109px;height:20px;line-height:20px;text-align:center;color:#333;font-weight:bold">有效委托金额</div>
<div class="a" style="left:1455.4px;top:234.0px;width:79px;height:20px;line-height:20px;text-align:center;color:#333;font-weight:bold">实际盈亏</div>
<div class="a" style="left:1534.5px;top:234.0px;width:80px;height:20px;line-height:20px;text-align:center;color:#333;font-weight:bold">买后余额</div>
<div class="a" style="left:1609.0px;top:234.0px;width:94px;height:20px;line-height:20px;text-align:center;color:#333;font-weight:bold">归属代理</div>
<div class="a" style="left:1709.4px;top:234.0px;width:79px;height:20px;line-height:20px;text-align:center;color:#333;font-weight:bold"></div>
<div class="a" style="left:1788.8px;top:234.0px;width:100px;height:20px;line-height:20px;text-align:center;color:#333;font-weight:bold">操作</div>
<div class="a" style="left:260.0px;top:276.6px;width:80px;height:20px;line-height:20px;text-align:center;color:#333">11</div>
<div class="a" style="left:340.2px;top:276.6px;width:79px;height:20px;line-height:20px;text-align:center;color:#333">123456</div>
<div class="a" style="left:419.5px;top:276.6px;width:80px;height:20px;line-height:20px;text-align:center;color:#333">123456</div>
<div class="a" style="left:499.6px;top:276.6px;width:158px;height:20px;line-height:20px;text-align:center;color:#333">2025-01-15 11:49:06</div>
<div class="a" style="left:657.9px;top:276.6px;width:93px;height:20px;line-height:20px;text-align:center;color:#333">BTC/USDT</div>
<div class="a" style="left:751.1px;top:276.6px;width:65px;height:20px;line-height:20px;text-align:center;color:#18bc9c">交易中</div>
<div class="a" style="left:816.5px;top:276.6px;width:50px;height:20px;line-height:20px;text-align:center;color:#18bc9c">买涨</div>
<div class="a" style="left:867.0px;top:276.6px;width:83px;height:20px;line-height:20px;text-align:center;color:#333">60</div>
<div class="a" style="left:950.8px;top:276.6px;width:114px;height:20px;line-height:20px;text-align:center;color:#333">97040.200000</div>
<div class="a" style="left:1065.3px;top:276.6px;width:91px;height:20px;line-height:20px;text-align:center;color:#333">未平仓</div>
<div class="a" style="left:1156.5px;top:272.1px;width:79px;height:20px;line-height:20px;text-align:center;color:#d0101e">5000.0</div>
<div class="a" style="left:1236.1px;top:272.1px;width:109px;height:20px;line-height:20px;text-align:center;color:#d0101e">5000.0</div>
<div class="a" style="left:1345.8px;top:272.1px;width:109px;height:20px;line-height:20px;text-align:center;color:#d0101e">0</div>
<div class="a" style="left:1455.4px;top:272.1px;width:79px;height:20px;line-height:20px;text-align:center;color:#1e8a1e">0.00</div>
<div class="a" style="left:1534.5px;top:272.1px;width:80px;height:20px;line-height:20px;text-align:center;color:#d0101e">6000.0</div>
<div class="a" style="left:1615.0px;top:276.6px;width:94px;height:20px;line-height:20px;text-align:center;color:#333">-</div>
<div class="a" style="left:1709.4px;top:276.6px;width:79px;height:20px;line-height:20px;text-align:center;color:#3a7fb0"><span style="border-bottom:1px dashed #3a7fb0;padding-bottom:1px">默认</span></div>
<div class="a" style="left:1804.0px;top:276.9px;width:70.0px;height:20.0px;background:#3a97da;border-radius:3px"></div>
<div class="a" style="left:1810.0px;top:281.6px;"><svg width="12" height="10" viewBox="0 0 14 12.5" ><g fill="#fff"><rect x="0" y="0.5" width="2.5" height="2.3"/><rect x="3.4" y="0.5" width="10.6" height="2.3"/><rect x="0" y="3.6" width="2.5" height="2.3"/><rect x="3.4" y="3.6" width="10.6" height="2.3"/><rect x="0" y="6.7" width="2.5" height="2.3"/><rect x="3.4" y="6.7" width="10.6" height="2.3"/><rect x="0" y="9.8" width="2.5" height="2.3"/><rect x="3.4" y="9.8" width="10.6" height="2.3"/></g></svg></div>
<div class="a" style="left:1824.0px;top:276.6px;height:20px;line-height:20px;color:#fff;font-size:11.5px">用户信息</div>
<div class="a" style="left:260.0px;top:320.5px;width:80px;height:20px;line-height:20px;text-align:center;color:#333">10</div>
<div class="a" style="left:340.2px;top:320.5px;width:79px;height:20px;line-height:20px;text-align:center;color:#333">123456</div>
<div class="a" style="left:419.5px;top:320.5px;width:80px;height:20px;line-height:20px;text-align:center;color:#333">123456</div>
<div class="a" style="left:499.6px;top:320.5px;width:158px;height:20px;line-height:20px;text-align:center;color:#333">2025-01-15 11:45:51</div>
<div class="a" style="left:657.9px;top:320.5px;width:93px;height:20px;line-height:20px;text-align:center;color:#333">现货黄金</div>
<div class="a" style="left:751.1px;top:320.5px;width:65px;height:20px;line-height:20px;text-align:center;color:#e74c3c">平仓</div>
<div class="a" style="left:816.5px;top:320.5px;width:50px;height:20px;line-height:20px;text-align:center;color:#e74c3c">买跌</div>
<div class="a" style="left:867.0px;top:320.5px;width:83px;height:20px;line-height:20px;text-align:center;color:#333">60</div>
<div class="a" style="left:950.8px;top:320.5px;width:114px;height:20px;line-height:20px;text-align:center;color:#333">2635.770000</div>
<div class="a" style="left:1065.3px;top:316.0px;width:91px;height:20px;line-height:20px;text-align:center;color:#3fae49">2635.7698</div>
<div class="a" style="left:1156.5px;top:316.0px;width:79px;height:20px;line-height:20px;text-align:center;color:#d0101e">5000.0</div>
<div class="a" style="left:1236.1px;top:316.0px;width:109px;height:20px;line-height:20px;text-align:center;color:#d0101e">0</div>
<div class="a" style="left:1345.8px;top:316.0px;width:109px;height:20px;line-height:20px;text-align:center;color:#d0101e">5000.0</div>
<div class="a" style="left:1455.4px;top:316.0px;width:79px;height:20px;line-height:20px;text-align:center;color:#d0101e">500.00</div>
<div class="a" style="left:1534.5px;top:316.0px;width:80px;height:20px;line-height:20px;text-align:center;color:#d0101e">5500.0</div>
<div class="a" style="left:1615.0px;top:320.5px;width:94px;height:20px;line-height:20px;text-align:center;color:#333">-</div>
<div class="a" style="left:1709.4px;top:320.5px;width:79px;height:20px;line-height:20px;text-align:center;color:#3a7fb0"><span style="border-bottom:1px dashed #3a7fb0;padding-bottom:1px">默认</span></div>
<div class="a" style="left:1804.0px;top:320.8px;width:70.0px;height:20.0px;background:#3a97da;border-radius:3px"></div>
<div class="a" style="left:1810.0px;top:325.5px;"><svg width="12" height="10" viewBox="0 0 14 12.5" ><g fill="#fff"><rect x="0" y="0.5" width="2.5" height="2.3"/><rect x="3.4" y="0.5" width="10.6" height="2.3"/><rect x="0" y="3.6" width="2.5" height="2.3"/><rect x="3.4" y="3.6" width="10.6" height="2.3"/><rect x="0" y="6.7" width="2.5" height="2.3"/><rect x="3.4" y="6.7" width="10.6" height="2.3"/><rect x="0" y="9.8" width="2.5" height="2.3"/><rect x="3.4" y="9.8" width="10.6" height="2.3"/></g></svg></div>
<div class="a" style="left:1824.0px;top:320.5px;height:20px;line-height:20px;color:#fff;font-size:11.5px">用户信息</div>
<div class="a" style="left:260.0px;top:365.4px;width:80px;height:20px;line-height:20px;text-align:center;color:#333">9</div>
<div class="a" style="left:340.2px;top:365.4px;width:79px;height:20px;line-height:20px;text-align:center;color:#333">123456</div>
<div class="a" style="left:419.5px;top:365.4px;width:80px;height:20px;line-height:20px;text-align:center;color:#333">123456</div>
<div class="a" style="left:499.6px;top:365.4px;width:158px;height:20px;line-height:20px;text-align:center;color:#333">2025-01-15 11:44:34</div>
<div class="a" style="left:657.9px;top:365.4px;width:93px;height:20px;line-height:20px;text-align:center;color:#333">现货黄金</div>
<div class="a" style="left:751.1px;top:365.4px;width:65px;height:20px;line-height:20px;text-align:center;color:#e74c3c">平仓</div>
<div class="a" style="left:816.5px;top:365.4px;width:50px;height:20px;line-height:20px;text-align:center;color:#18bc9c">买涨</div>
<div class="a" style="left:867.0px;top:365.4px;width:83px;height:20px;line-height:20px;text-align:center;color:#333">60</div>
<div class="a" style="left:950.8px;top:365.4px;width:114px;height:20px;line-height:20px;text-align:center;color:#333">2635.980000</div>
<div class="a" style="left:1065.3px;top:360.9px;width:91px;height:20px;line-height:20px;text-align:center;color:#d0101e">2635.9802</div>
<div class="a" style="left:1156.5px;top:360.9px;width:79px;height:20px;line-height:20px;text-align:center;color:#d0101e">5000.0</div>
<div class="a" style="left:1236.1px;top:360.9px;width:109px;height:20px;line-height:20px;text-align:center;color:#d0101e">0</div>
<div class="a" style="left:1345.8px;top:360.9px;width:109px;height:20px;line-height:20px;text-align:center;color:#d0101e">5000.0</div>
<div class="a" style="left:1455.4px;top:360.9px;width:79px;height:20px;line-height:20px;text-align:center;color:#d0101e">500.00</div>
<div class="a" style="left:1534.5px;top:360.9px;width:80px;height:20px;line-height:20px;text-align:center;color:#d0101e">5000.0</div>
<div class="a" style="left:1615.0px;top:365.4px;width:94px;height:20px;line-height:20px;text-align:center;color:#333">-</div>
<div class="a" style="left:1709.4px;top:365.4px;width:79px;height:20px;line-height:20px;text-align:center;color:#3a7fb0"><span style="border-bottom:1px dashed #3a7fb0;padding-bottom:1px">默认</span></div>
<div class="a" style="left:1804.0px;top:365.7px;width:70.0px;height:20.0px;background:#3a97da;border-radius:3px"></div>
<div class="a" style="left:1810.0px;top:370.4px;"><svg width="12" height="10" viewBox="0 0 14 12.5" ><g fill="#fff"><rect x="0" y="0.5" width="2.5" height="2.3"/><rect x="3.4" y="0.5" width="10.6" height="2.3"/><rect x="0" y="3.6" width="2.5" height="2.3"/><rect x="3.4" y="3.6" width="10.6" height="2.3"/><rect x="0" y="6.7" width="2.5" height="2.3"/><rect x="3.4" y="6.7" width="10.6" height="2.3"/><rect x="0" y="9.8" width="2.5" height="2.3"/><rect x="3.4" y="9.8" width="10.6" height="2.3"/></g></svg></div>
<div class="a" style="left:1824.0px;top:365.4px;height:20px;line-height:20px;color:#fff;font-size:11.5px">用户信息</div>
<div class="a" style="left:260.0px;top:409.5px;width:80px;height:20px;line-height:20px;text-align:center;color:#333">8</div>
<div class="a" style="left:340.2px;top:409.5px;width:79px;height:20px;line-height:20px;text-align:center;color:#333">123123</div>
<div class="a" style="left:419.5px;top:409.5px;width:80px;height:20px;line-height:20px;text-align:center;color:#333">123123</div>
<div class="a" style="left:499.6px;top:409.5px;width:158px;height:20px;line-height:20px;text-align:center;color:#333">2025-01-15 11:35:00</div>
<div class="a" style="left:657.9px;top:409.5px;width:93px;height:20px;line-height:20px;text-align:center;color:#333">现货黄金</div>
<div class="a" style="left:751.1px;top:409.5px;width:65px;height:20px;line-height:20px;text-align:center;color:#e74c3c">平仓</div>
<div class="a" style="left:816.5px;top:409.5px;width:50px;height:20px;line-height:20px;text-align:center;color:#18bc9c">买涨</div>
<div class="a" style="left:867.0px;top:409.5px;width:83px;height:20px;line-height:20px;text-align:center;color:#333">60</div>
<div class="a" style="left:950.8px;top:409.5px;width:114px;height:20px;line-height:20px;text-align:center;color:#333">2637.350000</div>
<div class="a" style="left:1065.3px;top:405.0px;width:91px;height:20px;line-height:20px;text-align:center;color:#d0101e">2637.3501</div>
<div class="a" style="left:1156.5px;top:405.0px;width:79px;height:20px;line-height:20px;text-align:center;color:#d0101e">5000.0</div>
<div class="a" style="left:1236.1px;top:405.0px;width:109px;height:20px;line-height:20px;text-align:center;color:#d0101e">0</div>
<div class="a" style="left:1345.8px;top:405.0px;width:109px;height:20px;line-height:20px;text-align:center;color:#d0101e">5000.0</div>
<div class="a" style="left:1455.4px;top:405.0px;width:79px;height:20px;line-height:20px;text-align:center;color:#d0101e">500.00</div>
<div class="a" style="left:1534.5px;top:405.0px;width:80px;height:20px;line-height:20px;text-align:center;color:#d0101e">15000.0</div>
<div class="a" style="left:1615.0px;top:409.5px;width:94px;height:20px;line-height:20px;text-align:center;color:#333">-</div>
<div class="a" style="left:1709.4px;top:409.5px;width:79px;height:20px;line-height:20px;text-align:center;color:#3a7fb0"><span style="border-bottom:1px dashed #3a7fb0;padding-bottom:1px">盈利</span></div>
<div class="a" style="left:1804.0px;top:409.8px;width:70.0px;height:20.0px;background:#3a97da;border-radius:3px"></div>
<div class="a" style="left:1810.0px;top:414.5px;"><svg width="12" height="10" viewBox="0 0 14 12.5" ><g fill="#fff"><rect x="0" y="0.5" width="2.5" height="2.3"/><rect x="3.4" y="0.5" width="10.6" height="2.3"/><rect x="0" y="3.6" width="2.5" height="2.3"/><rect x="3.4" y="3.6" width="10.6" height="2.3"/><rect x="0" y="6.7" width="2.5" height="2.3"/><rect x="3.4" y="6.7" width="10.6" height="2.3"/><rect x="0" y="9.8" width="2.5" height="2.3"/><rect x="3.4" y="9.8" width="10.6" height="2.3"/></g></svg></div>
<div class="a" style="left:1824.0px;top:409.5px;height:20px;line-height:20px;color:#fff;font-size:11.5px">用户信息</div>
<div class="a" style="left:260.0px;top:458.0px;height:20px;line-height:20px;color:#333">显示第 1 到第 4 条记录，总共 4 条记录</div>
<div class="a" style="left:1671px;top:218.5px;width:155px;height:50px;background:#fff;border:1px solid rgba(0,0,0,.2);border-radius:6px;box-shadow:0 5px 10px rgba(0,0,0,.2)"></div>
<div class="a" style="left:1737.0px;top:268.0px;"><svg width="24" height="12" viewBox="0 0 24 12"><path d="M0,0 L12,11 L24,0" fill="#fff" stroke="rgba(0,0,0,.25)" stroke-width="1"/><rect x="0" y="-1" width="24" height="1.5" fill="#fff"/></svg></div>
<div class="a" style="left:1686.8px;top:229.0px;width:43.7px;height:27.5px;border:1px solid #4f8fb5;background:#fff"></div>
<div class="a" style="left:1697px;top:243px;font-size:9px;line-height:10px;color:#555;transform:scaleY(.8)">默认</div>
<div class="a" style="left:1716.0px;top:241.0px;"><svg width="8" height="5" viewBox="0 0 8 5" ><path fill="#000" d="M0,0.5 H8 L4,4.5 Z"/></svg></div>
<div class="a" style="left:1738.3px;top:229.0px;width:32.4px;height:28.7px;background:#2c3e50;border-radius:3px"></div>
<div class="a" style="left:1748.0px;top:239.0px;"><svg width="13" height="10" viewBox="0 0 13 10" ><path fill="none" stroke="#fff" stroke-width="3" d="M1.2,5 L4.8,8.4 L11.8,1.4"/></svg></div>
<div class="a" style="left:1778.2px;top:229.5px;width:32.5px;height:27.7px;background:#f4f4f4;border:1px solid #ddd;border-radius:3px"></div>
<div class="a" style="left:1789.5px;top:238.5px;"><svg width="10" height="10" viewBox="0 0 10 10" ><path fill="none" stroke="#333" stroke-width="2.8" d="M1.2,1.2 L8.8,8.8 M8.8,1.2 L1.2,8.8"/></svg></div>
<div class="a" style="left:1686.8px;top:256.0px;width:43.7px;height:74.5px;background:#fff;border:1px solid #777;box-shadow:2px 3px 6px rgba(0,0,0,.3)"></div>
<div class="a" style="left:1687.8px;top:257.5px;width:41.7px;height:24.0px;background:#1a66d2"></div>
<div class="a" style="left:1687.5px;top:262.0px;width:43px;height:20px;line-height:20px;text-align:center;color:#fff;font-weight:bold;font-size:12px">默认</div>
<div class="a" style="left:1687.5px;top:285.5px;width:43px;height:20px;line-height:20px;text-align:center;color:#555;font-size:12px">盈利</div>
<div class="a" style="left:1687.5px;top:309.5px;width:43px;height:20px;line-height:20px;text-align:center;color:#555;font-size:12px">亏损</div>
</body></html>
